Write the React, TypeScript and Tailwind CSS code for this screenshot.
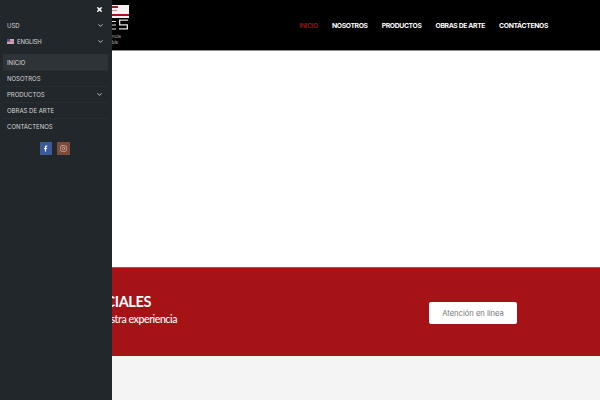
import { ChevronDown, X, Facebook, Instagram } from "lucide-react";

const NAV = ["INICIO", "NOSOTROS", "PRODUCTOS", "OBRAS DE ARTE", "CONTÁCTENOS"];
const SIDE = [
  { label: "INICIO", active: true },
  { label: "NOSOTROS" },
  { label: "PRODUCTOS", arrow: true },
  { label: "OBRAS DE ARTE" },
  { label: "CONTÁCTENOS" },
];

function Flag() {
  return (
    <svg width="7" height="5" viewBox="0 0 10 7" className="shrink-0">
      <rect width="10" height="7" fill="#d8c6d0" />
      <rect y="1" width="10" height="1" fill="#b9727f" />
      <rect y="3" width="10" height="1" fill="#b9727f" />
      <rect y="5" width="10" height="1" fill="#b9727f" />
      <rect width="4.5" height="3.5" fill="#4a4f8f" />
    </svg>
  );
}

function Sidebar() {
  return (
    <aside className="absolute left-0 top-0 z-10 h-[400px] w-[112px] bg-[#22272c] text-[6px] text-[#d6d6d6]">
      <div className="flex h-[13px] items-end justify-end pr-[9px]">
        <X className="h-[7px] w-[7px] text-white" strokeWidth={5} />
      </div>
      <div className="px-[7px] pt-[5px]">
        <div className="flex h-[15px] items-center justify-between pr-[1px]">
          <span>USD</span>
          <ChevronDown className="h-[7px] w-[7px]" strokeWidth={3} />
        </div>
        <div className="mt-[1px] flex h-[15px] items-center justify-between pr-[1px]">
          <span className="flex items-center gap-[3px]">
            <Flag />
            <span className="tracking-[-0.2px]">ENGLISH</span>
          </span>
          <ChevronDown className="h-[7px] w-[7px]" strokeWidth={3} />
        </div>
      </div>
      <nav className="mt-[5px] px-[3px]">
        {SIDE.map((item) => (
          <div
            key={item.label}
            className={
              item.active
                ? "flex h-[16px] w-[105px] items-center justify-between bg-[#2e3337] pl-[4px] pr-[5px]"
                : "flex h-[16px] w-[105px] items-center justify-between border-t border-[#282d32] pl-[4px] pr-[5px]"
            }
          >
            <span>{item.label}</span>
            {item.arrow && <ChevronDown className="h-[7px] w-[7px]" strokeWidth={3} />}
          </div>
        ))}
      </nav>
      <div className="mt-[8px] flex justify-center gap-[5px] pr-[3px]">
        <span className="flex h-[13px] w-[12px] items-center justify-center bg-[#3b5a9a] text-white">
          <Facebook className="h-[7px] w-[7px]" fill="currentColor" strokeWidth={0} />
        </span>
        <span className="flex h-[13px] w-[13px] items-center justify-center bg-[#7a4a3c] text-[#e6c8b8]">
          <Instagram className="h-[7px] w-[7px]" strokeWidth={2} />
        </span>
      </div>
    </aside>
  );
}

function Logo() {
  return (
    <div className="ml-[112px] flex w-[17px] flex-col">
      <svg width="17" height="26" viewBox="0 0 17 26" className="mt-[5px]">
        <rect width="17" height="13" fill="#f2f2f2" />
        <rect width="6" height="2" y="1" fill="#a8141a" />
        <rect width="17" height="2" y="9" fill="#a8141a" />
        <rect width="5" height="1" y="5" fill="#c9878a" />
        <path d="M0 16h4v1H0zM0 19.5h4v1H0zM0 23.5h4v1H0z M7 14.5h9v1.2H8.3v3.6H16v5.2H7v-1.2h7.7v-2.8H7z" fill="#e0e0e0" />
      </svg>
      <span className="mt-[3px] text-[4.5px] leading-[6px] text-[#bbbbbb]">ncia</span>
      <span className="text-[4.5px] leading-[6px] text-[#bbbbbb]">ble</span>
    </div>
  );
}

export default function App() {
  return (
    <div className="relative h-[400px] w-[600px] overflow-hidden bg-white font-['Inter',sans-serif]">
      <Sidebar />
      <header className="flex h-[51px] items-start justify-between border-b border-[#8c8c8c] bg-black">
        <Logo />
        <ul className="mr-[52px] mt-[21px] flex gap-[14px] text-[6.8px] font-bold leading-[9px] tracking-[-0.35px] text-white">
          {NAV.map((n, i) => (
            <li key={n} className={i === 0 ? "font-medium text-[#a8171c]" : ""}>
              {n}
            </li>
          ))}
        </ul>
      </header>
      <main className="h-[216px]" />
      <section className="flex h-[89px] items-center justify-between border-t border-[#b8494d] bg-[#a51317] pr-[83px]">
        <div className="mt-[-7px] w-[177px] whitespace-nowrap text-right font-['Lato',sans-serif] text-white">
          <div className="pr-[26px] text-[14.5px] font-bold leading-[20px] tracking-[-0.4px]">OFERTAS ESPECIALES</div>
          <div className="text-[10.5px] font-medium leading-[14px] tracking-[-0.4px]">Conoce nuestra experiencia</div>
        </div>
        <button className="mt-[2px] h-[22px] w-[88px] rounded-[2px] bg-white pt-[1px] text-[7.6px] text-[#777777]">
          Atención en línea
        </button>
      </section>
      <footer className="h-[44px] bg-[#f4f4f4]" />
    </div>
  );
}
